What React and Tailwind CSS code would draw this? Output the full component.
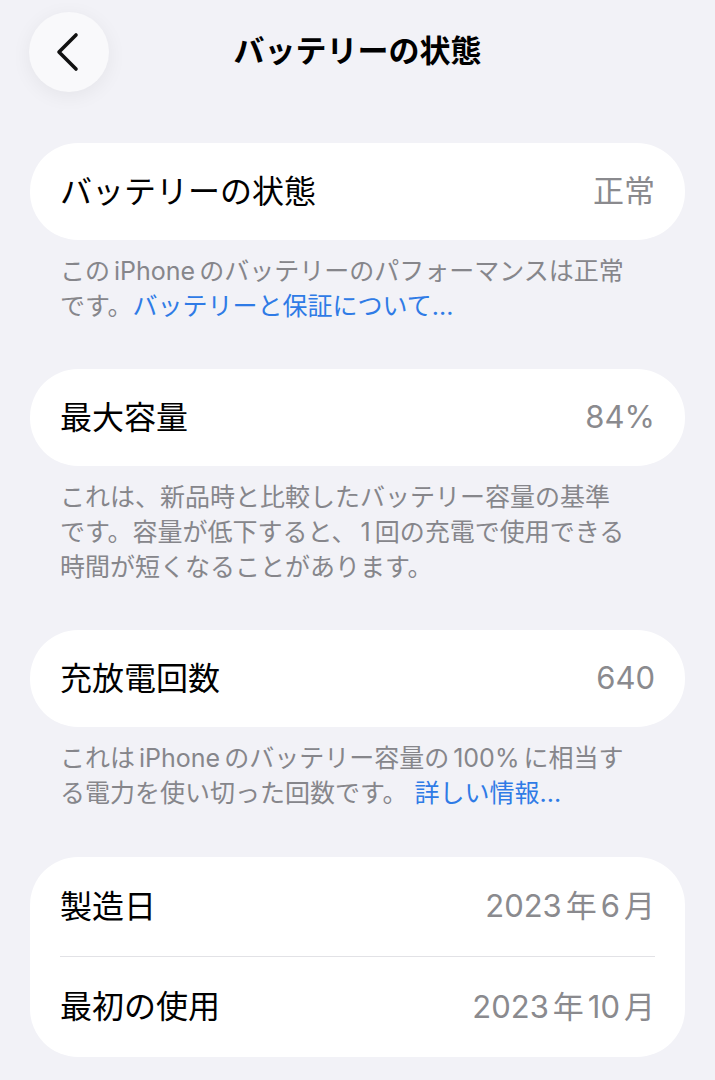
const font = { fontFamily: 'Inter, "Noto Sans CJK JP", sans-serif' };

function L({ children }) {
  return <span className="mx-[4px]">{children}</span>;
}

function Row({ label, value, divider, tall }) {
  return (
    <div className="px-[30px]">
      <div
        className={`flex items-center justify-between ${tall ? 'h-[100px]' : 'h-[97px]'} ${divider ? 'border-b border-[#e2e2e6]' : ''}`}
      >
        <span className="text-[32px] text-black">{label}</span>
        <span className="text-[31px] text-[#8a8a8e]">{value}</span>
      </div>
    </div>
  );
}

function Card({ children }) {
  return <div className="mx-[30px] rounded-[48px] bg-white">{children}</div>;
}

function Footer({ children }) {
  return (
    <div className="mt-[14px] whitespace-nowrap px-[60px] text-[25px] leading-[35px] text-[#86868b]">
      {children}
    </div>
  );
}

export default function App() {
  return (
    <div className="min-h-[1080px] bg-[#f2f2f7] pb-10" style={font}>
      <div className="relative flex h-[100px] items-center justify-center">
        <button className="absolute left-[29px] top-[12px] flex h-[80px] w-[80px] items-center justify-center rounded-full bg-[#f9f9fb] shadow-[0_4px_20px_rgba(0,0,0,0.06)]">
          <svg width="24" height="40" viewBox="0 0 24 40" fill="none" className="-ml-[3px]">
            <path d="M20 3L3 20l17 17" stroke="#111" strokeWidth="3.6" strokeLinecap="round" strokeLinejoin="round" />
          </svg>
        </button>
        <h1 className="pt-[2px] text-[31px] font-bold text-black">バッテリーの状態</h1>
      </div>

      <div className="mt-[43px]">
        <Card>
          <Row label="バッテリーの状態" value="正常" />
        </Card>
        <Footer>
          この<L>iPhone</L>のバッテリーのパフォーマンスは正常
          <br />
          です。<span className="text-[#2f7be6]">バッテリーと保証について...</span>
        </Footer>
      </div>

      <div className="mt-[45px]">
        <Card>
          <Row label="最大容量" value="84%" />
        </Card>
        <Footer>
          これは、新品時と比較したバッテリー容量の基準
          <br />
          です。容量が低下すると、<L>1</L>回の充電で使用できる
          <br />
          時間が短くなることがあります。
        </Footer>
      </div>

      <div className="mt-[45px]">
        <Card>
          <Row label="充放電回数" value="640" />
        </Card>
        <Footer>
          これは<L>iPhone</L>のバッテリー容量の<L>100%</L>に相当す
          <br />
          る電力を使い切った回数です。 <span className="text-[#2f7be6]">詳しい情報...</span>
        </Footer>
      </div>

      <div className="mt-[46px]">
        <Card>
          <Row label="製造日" value={<>2023<L>年</L>6<span className="ml-[4px]">月</span></>} divider tall />
          <Row label="最初の使用" value={<>2023<L>年</L>10<span className="ml-[4px]">月</span></>} tall />
        </Card>
      </div>
    </div>
  );
}
